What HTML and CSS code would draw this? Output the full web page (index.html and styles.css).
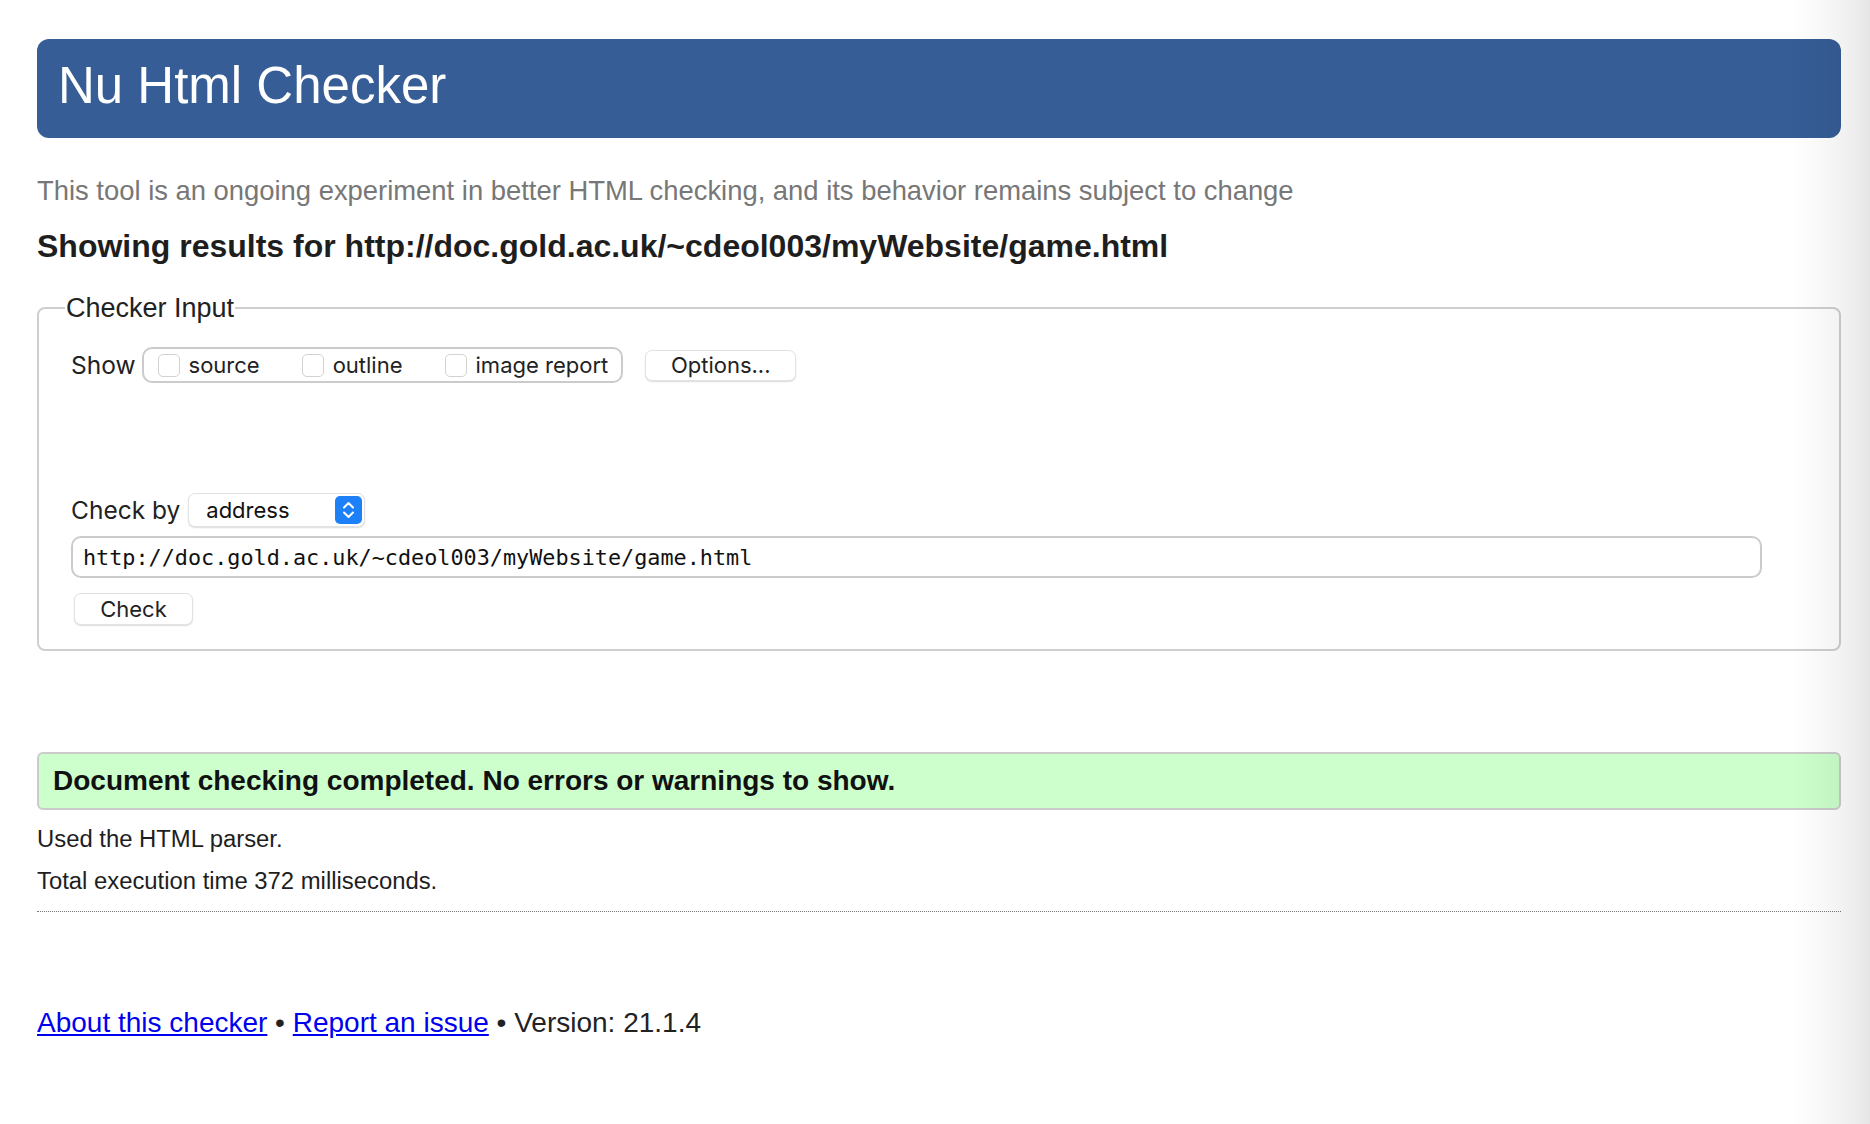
FILE: index.html
```html
<!DOCTYPE html>
<html lang="en">
<head>
<meta charset="utf-8">
<title>Nu Html Checker</title>
<link rel="stylesheet" href="styles.css">
</head>
<body>
<div class="page">
  <header class="banner"><h1>Nu Html Checker</h1></header>
  <p class="intro">This tool is an ongoing experiment in better HTML checking, and its behavior remains subject to change</p>
  <h2 class="showing">Showing results for http://doc.gold.ac.uk/~cdeol003/myWebsite/game.html</h2>

  <fieldset class="checker">
    <legend>Checker Input</legend>
    <div class="row show-row">
      <span class="label">Show</span>
      <div class="show-group">
        <label class="opt"><input type="checkbox" class="cb"><span>source</span></label>
        <label class="opt"><input type="checkbox" class="cb"><span>outline</span></label>
        <label class="opt"><input type="checkbox" class="cb"><span>image report</span></label>
      </div>
      <button class="btn options" type="button">Options...</button>
    </div>
    <div class="row by-row">
      <span class="label">Check by</span>
      <div class="select">
        <span class="select-text">address</span>
        <svg class="stepper" width="27" height="28" viewBox="0 0 27 28" aria-hidden="true">
          <rect x="0" y="0" width="27" height="28" rx="5" fill="#1d80f7"/>
          <path d="M9 11.5 L13.5 7 L18 11.5" fill="none" stroke="#fff" stroke-width="2" stroke-linecap="round" stroke-linejoin="round"/>
          <path d="M9 16.5 L13.5 21 L18 16.5" fill="none" stroke="#fff" stroke-width="2" stroke-linecap="round" stroke-linejoin="round"/>
        </svg>
      </div>
    </div>
    <input class="url" type="text" value="http://doc.gold.ac.uk/~cdeol003/myWebsite/game.html">
    <div class="row submit-row"><button class="btn check" type="button">Check</button></div>
  </fieldset>

  <p class="success">Document checking completed. No errors or warnings to show.</p>
  <p class="stat">Used the HTML parser.</p>
  <p class="stat">Total execution time 372 milliseconds.</p>
  <hr class="rule">
  <p class="footer"><a href="#">About this checker</a> • <a href="#">Report an issue</a> • Version: 21.1.4</p>
</div>
</body>
</html>
```

FILE: styles.css
```css
html {
  background: #fff;
}
body {
  margin: 0;
  font-family: "Liberation Sans", Arial, Helvetica, sans-serif;
  color: #222;
}
body::after {
  content: "";
  position: fixed;
  top: 0;
  right: 0;
  width: 80px;
  height: 100%;
  pointer-events: none;
  background: linear-gradient(to right, rgba(0,0,0,0) 0, rgba(0,0,0,0.03) 45%, rgba(0,0,0,0.065) 80%, rgba(0,0,0,0.1) 100%);
}
.page {
  padding: 39px 29px 60px 37px;
}
.banner {
  background: #365d96;
  border-radius: 12px;
  height: 99px;
  padding-left: 21px;
  box-sizing: border-box;
}
.banner h1 {
  margin: 0;
  font-size: 51px;
  font-weight: normal;
  line-height: 93px;
  color: #fff;
}
.intro {
  margin: 38px 0 0;
  font-size: 27.4px;
  line-height: 30px;
  color: #777;
}
.showing {
  margin: 22px 0 0;
  font-size: 32px;
  line-height: 36px;
  font-weight: bold;
  color: #1e1e1e;
}
.checker {
  margin: 29px 0 0;
  border: 2px solid #cfcfcf;
  border-radius: 8px;
  padding: 0 30px 24px 32px;
  min-width: 0;
}
.checker legend {
  font-size: 27px;
  line-height: 30px;
  padding: 0 1px;
  margin-left: -6px;
  color: #222;
}
.row {
  display: flex;
  align-items: center;
}
.label {
  font-family: Inter, "Liberation Sans", sans-serif;
  font-size: 24.5px;
  color: #222;
}
.show-row {
  margin-top: 24px;
  height: 36px;
}
.show-group {
  margin-left: 6px;
  height: 36px;
  box-sizing: border-box;
  border: 2px solid #cbcbcb;
  border-radius: 10px;
  display: flex;
  align-items: center;
  padding: 0 13px 0 14px;
  gap: 42px;
}
.opt {
  display: flex;
  align-items: center;
  gap: 9px;
  font-family: Inter, "Liberation Sans", sans-serif;
  font-size: 22px;
  color: #222;
}
.cb {
  -webkit-appearance: none;
  appearance: none;
  margin: 0;
  width: 22px;
  height: 23px;
  border: 1px solid #d2d2d2;
  border-radius: 5px;
  background: #fff;
  box-sizing: border-box;
}
.btn {
  font-family: Inter, "Liberation Sans", sans-serif;
  font-size: 22px;
  color: #222;
  background: #fff;
  border: 1px solid #e2e2e2;
  border-radius: 7px;
  box-shadow: 0 1px 1.5px rgba(0,0,0,0.14);
  padding: 0;
  box-sizing: border-box;
}
.options {
  margin-left: 22px;
  width: 151px;
  height: 31px;
}
.by-row {
  margin-top: 110px;
  height: 34px;
}
.select {
  margin-left: 8px;
  width: 177px;
  height: 34px;
  box-sizing: border-box;
  border: 1px solid #e2e2e2;
  border-radius: 7px;
  box-shadow: 0 1px 1.5px rgba(0,0,0,0.14);
  background: #fff;
  display: flex;
  align-items: center;
  justify-content: space-between;
  padding: 0 2px 0 17px;
}
.select-text {
  font-family: Inter, "Liberation Sans", sans-serif;
  font-size: 22px;
  color: #111;
}
.stepper {
  display: block;
}
.url {
  display: block;
  margin: 9px 0 0;
  width: 1691px;
  height: 42px;
  box-sizing: border-box;
  border: 2px solid #cbcbcb;
  border-radius: 10px;
  padding: 0 10px;
  font-family: "DejaVu Sans Mono", "Liberation Mono", monospace;
  font-size: 21.8px;
  color: #111;
  background: #fff;
  outline: none;
}
.submit-row {
  margin-top: 15px;
}
.check {
  margin-left: 3px;
  width: 119px;
  height: 32px;
}
.success {
  margin: 101px 0 0;
  background: #ccffcc;
  border: 2px solid #cbcbcb;
  border-radius: 6px;
  padding: 0 14px;
  font-size: 28px;
  line-height: 54px;
  font-weight: bold;
  color: #111;
}
.stat {
  margin: 0;
  font-size: 23.85px;
  line-height: 41.5px;
  color: #1e1e1e;
}
.success + .stat {
  margin-top: 8px;
}
.rule {
  margin: 10px 0 0;
  border: 0;
  border-top: 1px dotted #777;
  height: 0;
}
.footer {
  margin: 94px 0 0;
  font-size: 28px;
  line-height: 34px;
  color: #222;
}
.footer a {
  color: #0000ee;
  text-decoration: underline;
}
```
